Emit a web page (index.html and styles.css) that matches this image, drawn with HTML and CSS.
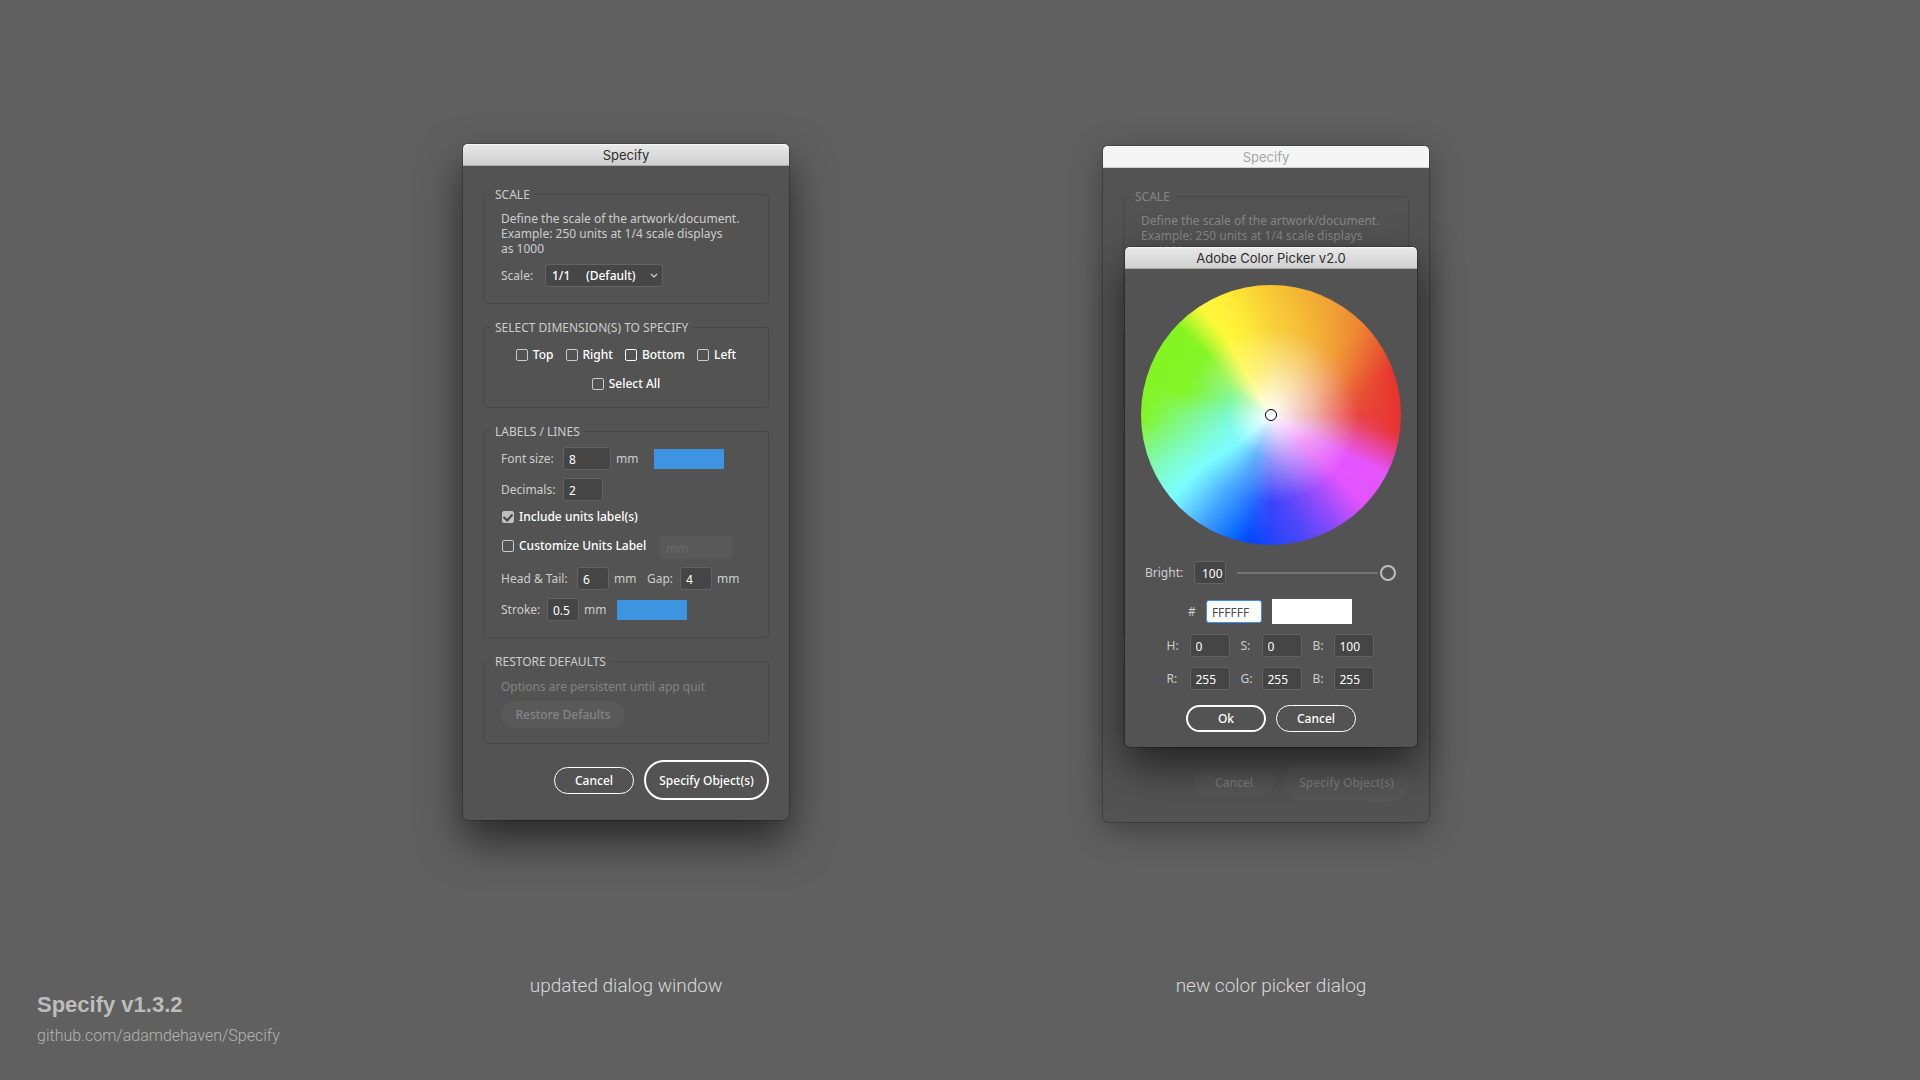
FILE: index.html
```html
<!DOCTYPE html>
<html lang="en">
<head>
<meta charset="utf-8">
<title>Specify v1.3.2</title>
<link rel="stylesheet" href="styles.css">
</head>
<body>
<div class="page">
  <footer class="about">
    <h1 class="about-title">Specify v1.3.2</h1>
    <a class="about-link" href="https://github.com/adamdehaven/Specify">github.com/adamdehaven/Specify</a>
  </footer>

  <main class="showcase">
    <figure class="shot">
      <section class="window">
        <h2 class="titlebar">Specify</h2>
        <form class="window-body">
          <fieldset class="group group-scale">
            <legend>SCALE</legend>
            <p class="note">Define the scale of the artwork/document.<br>Example: 250 units at 1/4 scale displays<br>as 1000</p>
            <div class="row">
              <label class="col-scale" for="scale">Scale:</label>
              <span class="select">
                <select id="scale"><option>1/1 &nbsp;&nbsp;&nbsp; (Default)</option></select>
                <svg class="chevron" viewBox="0 0 8 6" aria-hidden="true"><path d="M1 1l3 3 3-3"/></svg>
              </span>
            </div>
          </fieldset>

          <fieldset class="group group-dimensions">
            <legend>SELECT DIMENSION(S) TO SPECIFY</legend>
            <div class="checks">
              <label class="check"><input type="checkbox">Top</label>
              <label class="check"><input type="checkbox">Right</label>
              <label class="check"><input class="is-active" type="checkbox">Bottom</label>
              <label class="check"><input type="checkbox">Left</label>
            </div>
            <div class="checks">
              <label class="check"><input type="checkbox">Select All</label>
            </div>
          </fieldset>

          <fieldset class="group group-labels">
            <legend>LABELS / LINES</legend>
            <div class="row">
              <label class="col-size" for="font-size">Font size:</label>
              <input class="field w48" id="font-size" type="text" value="8">
              <span class="unit">mm</span>
              <button class="swatch swatch-wide-gap" type="button" aria-label="Label color"></button>
            </div>
            <div class="row">
              <label class="col-size" for="decimals">Decimals:</label>
              <input class="field w40" id="decimals" type="text" value="2">
            </div>
            <div class="row row-include">
              <label class="check"><input type="checkbox" checked>Include units label(s)</label>
            </div>
            <div class="row row-custom">
              <label class="check"><input type="checkbox">Customize Units Label</label>
              <input class="field w72" type="text" value="mm" aria-label="Custom units" disabled>
            </div>
            <div class="row">
              <label class="col-head" for="head">Head &amp; Tail:</label>
              <input class="field w32" id="head" type="text" value="6">
              <span class="unit">mm</span>
              <label class="col-gap" for="gap">Gap:</label>
              <input class="field w32" id="gap" type="text" value="4">
              <span class="unit">mm</span>
            </div>
            <div class="row">
              <label class="col-stroke" for="stroke">Stroke:</label>
              <input class="field w32" id="stroke" type="text" value="0.5">
              <span class="unit">mm</span>
              <button class="swatch" type="button" aria-label="Line color"></button>
            </div>
          </fieldset>

          <fieldset class="group group-restore">
            <legend>RESTORE DEFAULTS</legend>
            <p class="hint">Options are persistent until app quit</p>
            <button class="pill pill-restore" type="button" disabled>Restore Defaults</button>
          </fieldset>

          <div class="actions">
            <button class="pill" type="button">Cancel</button>
            <button class="pill pill-primary pill-large" type="button">Specify Object(s)</button>
          </div>
        </form>
      </section>
      <figcaption>updated dialog window</figcaption>
    </figure>

    <figure class="shot shot-picker">
      <section class="window window-inactive">
        <h2 class="titlebar">Specify</h2>
        <form class="window-body">
          <fieldset class="group group-scale">
            <legend>SCALE</legend>
            <p class="note">Define the scale of the artwork/document.<br>Example: 250 units at 1/4 scale displays<br>as 1000</p>
          </fieldset>
          <fieldset class="group group-dimensions"></fieldset>
          <fieldset class="group group-labels"></fieldset>
          <fieldset class="group group-restore"></fieldset>
          <div class="actions">
            <button class="pill" type="button" disabled>Cancel</button>
            <button class="pill pill-large" type="button" disabled>Specify Object(s)</button>
          </div>
        </form>

        <section class="window picker">
          <h2 class="titlebar">Adobe Color Picker v2.0</h2>
          <form class="picker-body">
            <div class="wheel">
              <div class="ring ring-outer"></div>
              <div class="ring ring-middle"></div>
              <div class="ring ring-inner"></div>
              <div class="ring ring-center"></div>
              <span class="cursor"></span>
            </div>
            <div class="bright">
              <label class="col-bright" for="bright">Bright:</label>
              <input class="field w32" id="bright" type="text" value="100">
              <input class="slider" type="range" min="0" max="100" value="100" aria-label="Brightness">
            </div>
            <div class="hex">
              <label for="hex">#</label>
              <input class="field field-focus w56" id="hex" type="text" value="FFFFFF">
              <span class="preview"></span>
            </div>
            <div class="channels">
              <label for="hue">H:</label><input class="field w40" id="hue" type="text" value="0">
              <label for="sat">S:</label><input class="field w40" id="sat" type="text" value="0">
              <label for="bri">B:</label><input class="field w40" id="bri" type="text" value="100">
            </div>
            <div class="channels">
              <label for="red">R:</label><input class="field w40" id="red" type="text" value="255">
              <label for="green">G:</label><input class="field w40" id="green" type="text" value="255">
              <label for="blue">B:</label><input class="field w40" id="blue" type="text" value="255">
            </div>
            <div class="picker-actions">
              <button class="pill pill-primary" type="button">Ok</button>
              <button class="pill" type="button">Cancel</button>
            </div>
          </form>
        </section>
      </section>
      <figcaption>new color picker dialog</figcaption>
    </figure>
  </main>
</div>
</body>
</html>
```
FILE: styles.css
```css
* { box-sizing: border-box; }

body {
  margin: 0;
  background: #606060;
  color: #cdcdcd;
  font: 12px/16px "Noto Sans", sans-serif;
}

h1, h2, p, figure, fieldset, legend { margin: 0; padding: 0; }

input, select, button { font: inherit; margin: 0; }

/* Page */
.page {
  display: grid;
  grid-template-columns: 1fr auto 1fr;
  min-height: 100vh;
  padding: 144px 28px 32px 0;
}

.about {
  align-self: end;
  padding-left: 37px;
  color: #bdbdbd;
}

.about-title {
  font: bold 22px/28px "Liberation Sans", sans-serif;
  margin-bottom: 4px;
}

.about-link {
  display: block;
  color: #b4b4b4;
  font: 300 16px/25px Roboto, sans-serif;
  text-decoration: none;
}

.showcase {
  display: flex;
  gap: 314px;
}

.shot {
  display: flex;
  flex-direction: column;
  justify-content: space-between;
  padding-bottom: 51px;
  text-align: center;
}

.shot-picker { padding-top: 2px; }
.shot-picker figcaption { padding-left: 10px; }

figcaption {
  color: #dadada;
  font: 300 19px/22px Roboto, sans-serif;
}

/* Windows */
.window {
  position: relative;
  width: 326px;
  border-radius: 5px;
  background: #535353;
  box-shadow: 0 0 0 1px rgba(0, 0, 0, .2), 0 20px 44px rgba(0, 0, 0, .6);
  text-align: left;
}

.titlebar {
  height: 22px;
  border-bottom: 1px solid #a9a9a9;
  border-radius: 5px 5px 0 0;
  background: linear-gradient(#e9e9e9, #cfcfcf);
  box-shadow: inset 0 1px #f4f4f4;
  color: #2e2e2e;
  font: 400 13px/23px Inter, sans-serif;
  text-align: center;
}

.window-body {
  display: flex;
  flex-direction: column;
  gap: 15px;
  padding: 20px;
}

/* Option groups */
.group {
  min-width: 0;
  border: 1px solid #484848;
  border-radius: 3px;
  padding: 9px 17px 16px;
}

.group legend {
  height: 16px;
  margin-left: -10px;
  padding: 0 4px;
  line-height: 18px;
}

.note {
  margin-bottom: 8px;
  line-height: 15px;
  white-space: nowrap;
}

.row {
  display: flex;
  align-items: center;
  gap: 5px;
  margin-bottom: 8px;
}

.row > label, .row > .unit { line-height: 18px; }

.row:last-child { margin-bottom: 0; }

.group-dimensions { padding-bottom: 12px; }
.group-labels { padding-top: 8px; }

.col-scale { width: 39px; }
.col-size { width: 57px; }
.col-head { width: 71px; }
.col-gap { width: 28px; margin-left: 4px; }
.col-stroke { width: 41px; }
.unit { width: 24px; }

.w32 { width: 32px; }
.w40 { width: 40px; }
.w48 { width: 48px; }
.w56 { width: 56px; }
.w72 { width: 72px; }

.select {
  position: relative;
  color: #fff;
}

.select select {
  display: block;
  width: 118px;
  height: 23px;
  border: 1px solid #636363;
  border-radius: 3px;
  padding: 1px 0 0 6px;
  appearance: none;
  background: #464646;
  color: inherit;
  font-weight: 500;
}

.chevron {
  position: absolute;
  top: 9px;
  right: 5px;
  width: 8px;
  height: 6px;
  fill: none;
  stroke: #d5d5d5;
  stroke-width: 1.2;
}

.checks {
  display: flex;
  justify-content: center;
  gap: 12px;
  height: 22px;
}

.checks + .checks { margin-top: 7px; }

.check {
  display: flex;
  align-items: center;
  gap: 5px;
  color: #fff;
  font-weight: 500;
  white-space: nowrap;
}

.check input {
  display: grid;
  place-items: center;
  width: 12px;
  height: 12px;
  border: 1px solid #cbcbcb;
  border-radius: 2px;
  appearance: none;
}

.check .is-active { border-color: #fff; }

.check input:checked {
  background: #bfbfbf;
  border-color: #bfbfbf;
}

.check input:checked::before {
  content: "";
  width: 4px;
  height: 7px;
  margin-top: -2px;
  border: solid #454545;
  border-width: 0 2px 2px 0;
  rotate: 42deg;
}

.row-include {
  height: 19px;
  padding-bottom: 3px;
  padding-left: 1px;
}

.row-custom {
  align-items: flex-start;
  justify-content: space-between;
  padding-right: 19px;
  padding-left: 1px;
}

.row-custom .check { height: 20px; }

.field {
  height: 23px;
  border: 1px solid #636363;
  border-radius: 3px;
  padding: 2px 0 0 5px;
  background: #454545;
  color: #fff;
}

.field:disabled {
  border-color: #595959;
  background: #595959;
  color: #6a6a6a;
}

.field-focus {
  border-color: #3c93e6;
  background: #fff;
  color: #4b4b4b;
}

.swatch {
  width: 70px;
  height: 20px;
  margin-left: 4px;
  border: 0;
  background: #3d95e2;
}

.swatch-wide-gap { margin-left: 9px; }

.hint {
  margin-bottom: 6px;
  color: #838383;
  line-height: 17px;
}

.group-restore { padding-bottom: 15px; }

/* Buttons */
.pill {
  display: block;
  width: 80px;
  height: 27px;
  border: 1px solid #fff;
  border-radius: 20px;
  padding: 1px 0 0;
  background: transparent;
  color: #fff;
  font-weight: 500;
  white-space: nowrap;
}

.pill-primary { border-width: 2px; }

.pill-large {
  width: 125px;
  height: 40px;
}

.pill-restore { width: 124px; }

.pill:disabled {
  border-color: transparent;
  background: #595959;
  background-clip: border-box;
  color: #858585;
}

.actions {
  display: flex;
  align-items: center;
  justify-content: flex-end;
  gap: 10px;
  margin-top: 1px;
}

/* Background window */
.window-inactive {
  box-shadow: 0 0 0 1px rgba(0, 0, 0, .2), 0 8px 32px rgba(0, 0, 0, .35);
  color: #868686;
}

.window-inactive > .titlebar {
  background: #f5f5f5;
  border-color: #cfcfcf;
  color: #a5a5a5;
}

.window-inactive .group-scale { height: 118px; }
.window-inactive .group-dimensions { height: 80px; margin-top: 8px; }
.window-inactive .group-labels { height: 207px; margin-top: 8px; }
.window-inactive .group-restore { height: 84px; margin-top: 8px; }

.window-inactive > .window-body .pill:disabled {
  background: #575757;
  color: #7c7c7c;
}

/* Color picker, stacked over its parent window */
.picker {
  position: absolute;
  top: 101px;
  left: 22px;
  width: 292px;
  color: #cdcdcd;
  box-shadow: 0 0 0 1px rgba(0, 0, 0, .25), 0 18px 44px rgba(0, 0, 0, .6);
}

.picker-body {
  display: flex;
  flex-direction: column;
  align-items: center;
  padding: 16px 16px 15px;
}

/* Each ring holds the hues at one radius and fades into the next one out */
.wheel {
  display: grid;
  place-items: center;
  width: 260px;
  height: 260px;
}

.wheel > * {
  grid-area: 1 / 1;
  isolation: isolate;
}

.ring {
  width: 260px;
  height: 260px;
  border-radius: 50%;
}

.ring-outer {
  background: conic-gradient(
    #f8c732 0deg, #f0a033 28deg, #ed8233 45deg, #e8552f 59deg, #e8332e 70deg,
    #e8332e 98deg, #e83c80 105deg, #e64ac8 112deg, #e455fe 117deg,
    #e253fe 135deg, #8c4afc 150deg, #4a48fa 165deg, #2244f8 180deg,
    #0044ff 190deg, #0068ff 197deg, #3c98fd 210deg, #70e8fe 225deg,
    #7dfffd 231deg, #80fbc0 245deg, #82f880 255deg, #84f522 268deg,
    #84f522 314deg, #b8f62c 319deg, #fff93a 327deg, #ffee38 338deg, #f8c732 360deg);
}

.ring-middle {
  background: conic-gradient(
    #f9d23a 0deg, #f3b53a 30deg, #f0a035 45deg, #ec8038 60deg, #e85a34 75deg,
    #e84540 90deg, #e64a68 97deg, #e850a0 105deg, #e455fe 118deg,
    #e256fe 132deg, #9a4efb 150deg, #6048fa 165deg, #3c44fa 180deg,
    #2468ff 190deg, #48a8fe 210deg, #7dfffd 233deg, #80fab0 255deg,
    #82f780 270deg, #84f52a 285deg, #84f528 313deg, #c8f735 322deg,
    #fff93a 330deg, #fdea38 345deg, #f9d23a 360deg);
  mask-image: radial-gradient(closest-side, #000 67%, transparent);
}

.ring-inner {
  background: conic-gradient(
    #fceb90 0deg, #f8dc98 30deg, #f4c4a0 60deg, #eeb0a8 90deg, #ecb0c8 100deg,
    #f0a8f0 115deg, #f098fa 130deg, #d09cfb 150deg, #9898fa 180deg,
    #60b0fd 200deg, #70d8fe 215deg, #7dfafd 228deg, #7dfcee 250deg,
    #7cf8cc 270deg, #80f7a0 290deg, #98f78c 303deg, #d0f880 316deg,
    #fff97a 330deg, #fef080 345deg, #fceb90 360deg);
  mask-image: radial-gradient(closest-side, #000 33%, transparent 67%);
}

.ring-center { background: radial-gradient(closest-side, #fff, rgba(255, 255, 255, 0) 33%); }

.cursor {
  width: 12px;
  height: 12px;
  border: 1px solid #000;
  border-radius: 50%;
  background: #fff;
}

.bright {
  display: flex;
  align-items: center;
  width: 252px;
  margin: 16px 0 15px;
  padding-right: 1px;
}

.col-bright { width: 49px; }

.bright .field { padding-left: 7px; }

.slider {
  flex: 1;
  width: 0;
  height: 16px;
  margin-left: 11px;
  appearance: none;
  background: linear-gradient(#757575, #757575) left center / calc(100% - 18px) 2px no-repeat;
}

.slider::-webkit-slider-thumb {
  width: 16px;
  height: 16px;
  border: 2px solid #bebebe;
  border-radius: 50%;
  appearance: none;
  background: #535353;
}

.hex {
  display: flex;
  align-items: center;
  gap: 10px;
  padding-right: 2px;
}

.preview {
  width: 80px;
  height: 25px;
  background: #fff;
}

.channels {
  display: grid;
  grid-template-columns: 23px 51px 21px 51px 21px 40px;
  align-items: center;
  margin-top: 10px;
  padding-right: 2px;
}

.picker-actions {
  display: flex;
  gap: 10px;
  margin-top: 15px;
}
```
